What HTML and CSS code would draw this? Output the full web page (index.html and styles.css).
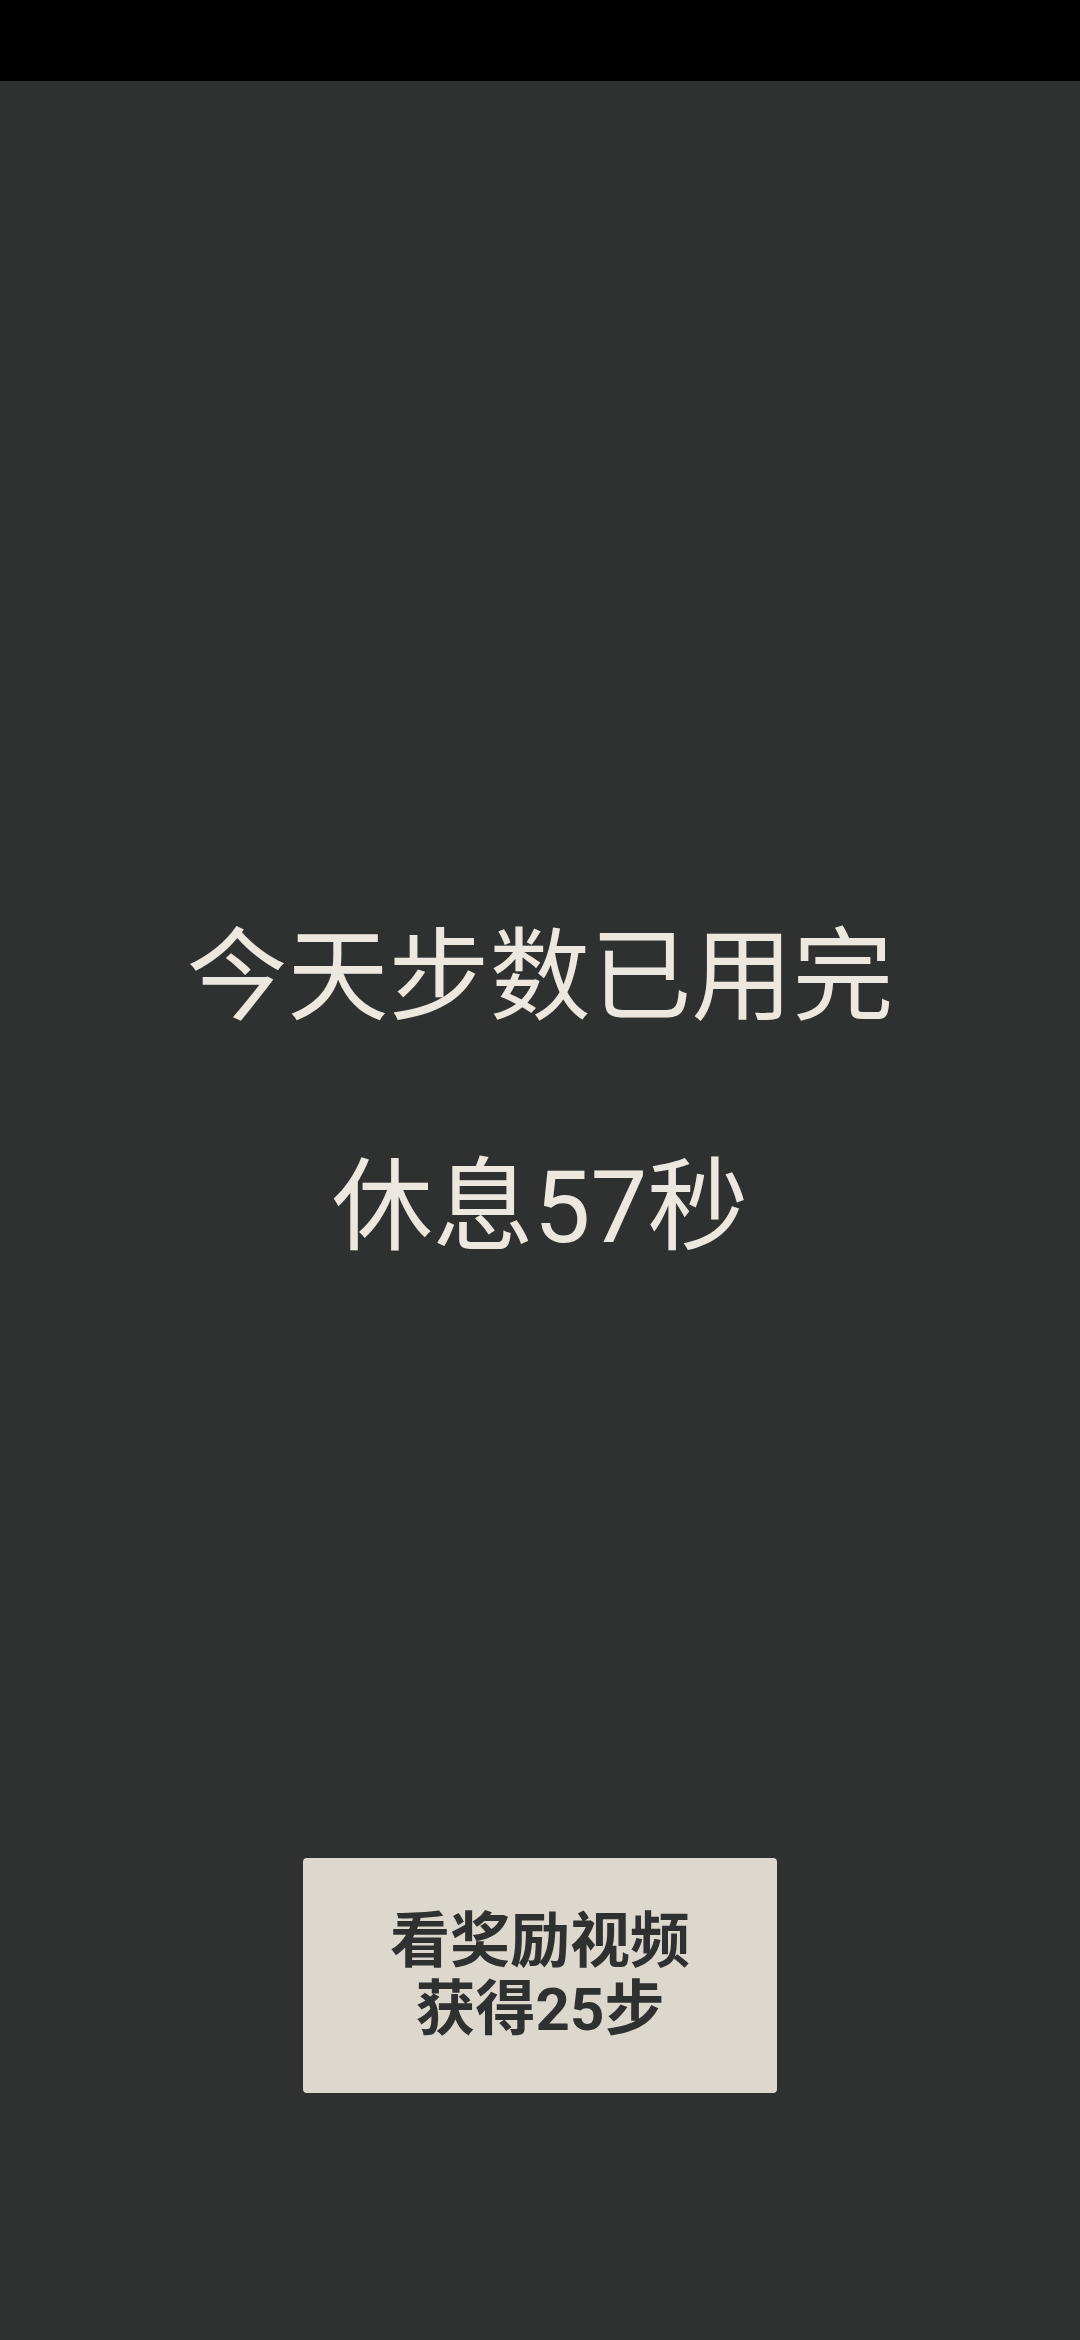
FILE: index.html
```html
<!DOCTYPE html>
<html lang="zh-CN">
<head>
<meta charset="utf-8">
<title>休息</title>
<link rel="stylesheet" href="styles.css">
</head>
<body>
<div class="status"></div>
<main class="main">
  <div class="title">今天步数已用完</div>
  <div class="timer">休息57秒</div>
  <button class="reward">看奖励视频<br>获得25步</button>
</main>
</body>
</html>
```

FILE: styles.css
```css
html, body {
  margin: 0;
  padding: 0;
  width: 1080px;
  height: 2340px;
  background: #2e3130;
  font-family: Roboto, "Noto Sans CJK SC", sans-serif;
  overflow: hidden;
}
.status {
  height: 81px;
  background: #000;
}
.main {
  display: flex;
  flex-direction: column;
  align-items: center;
  padding-top: 832px;
}
.title, .timer {
  color: #ece8df;
  font-size: 101px;
  line-height: 130px;
  height: 130px;
  white-space: nowrap;
}
.timer {
  margin-top: 100px;
}
.reward {
  margin-top: 585px;
  width: 474px;
  height: 235px;
  border: none;
  border-radius: 4px;
  background: #dcd8cd;
  color: #2e3130;
  font-family: Roboto, "Noto Sans CJK SC", sans-serif;
  font-size: 60px;
  font-weight: 700;
  line-height: 68px;
  padding: 0;
}
```
